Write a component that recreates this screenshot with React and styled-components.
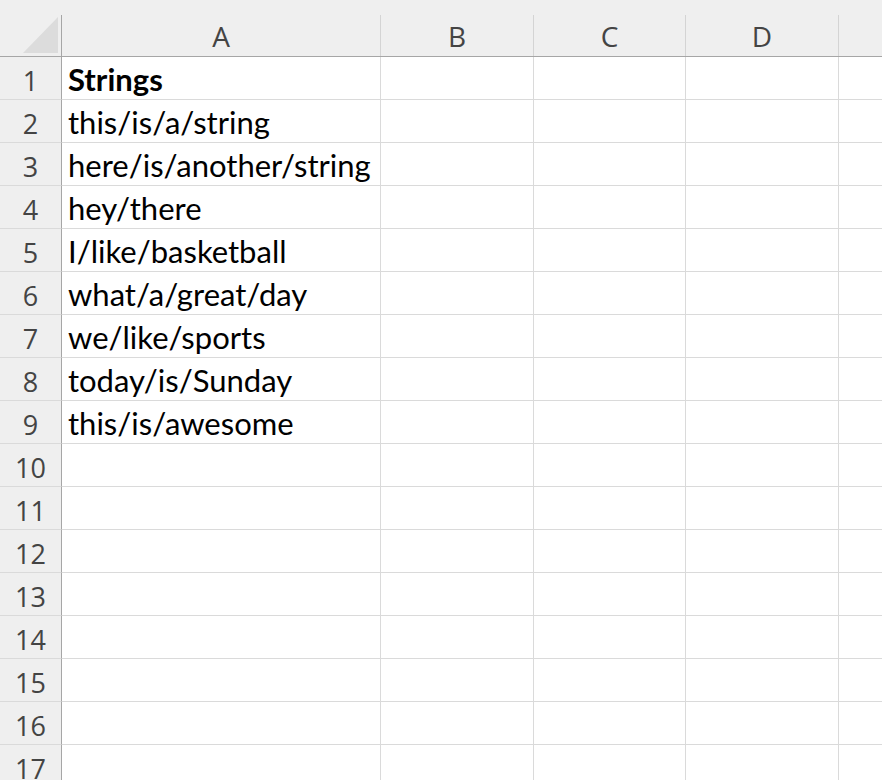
import React from "react";
import styled, { createGlobalStyle } from "styled-components";

const Global = createGlobalStyle`
  html, body { margin: 0; padding: 0; background: #ffffff; overflow: hidden; }
  body { width: 882px; height: 780px; }
`;

const COLS = [
  { key: "A", width: 319 },
  { key: "B", width: 153 },
  { key: "C", width: 152 },
  { key: "D", width: 153 },
  { key: "E", width: 120 },
];

const GRID = `62px ${COLS.map((c) => c.width + "px").join(" ")}`;

const Sheet = styled.div`
  width: 882px;
  height: 780px;
  overflow: hidden;
  background: #ffffff;
`;

const HeaderBar = styled.div`
  background: #efefef;
  padding-top: 15px;
  border-bottom: 1px solid #a6a6a6;
  display: grid;
  grid-template-columns: ${GRID};
`;

const Corner = styled.div`
  position: relative;
  height: 41px;
  box-sizing: border-box;
  border-right: 1px solid #a6a6a6;
`;

const CornerTriangle = styled.div`
  position: absolute;
  right: 3px;
  bottom: 3px;
  width: 35px;
  height: 36px;
  background: #dcdcdc;
  clip-path: polygon(100% 0, 100% 100%, 0 100%);
`;

const ColHead = styled.div`
  height: 41px;
  box-sizing: border-box;
  border-right: 1px solid #d4d4d4;
  display: flex;
  align-items: center;
  justify-content: center;
  font-family: "Open Sans", "Noto Sans", sans-serif;
  font-size: 28px;
  color: #444444;
  padding-top: 1px;
`;

const Row = styled.div`
  display: grid;
  grid-template-columns: ${GRID};
  height: 43px;
`;

const RowHead = styled.div`
  background: #efefef;
  box-sizing: border-box;
  border-right: 1px solid #a6a6a6;
  border-bottom: 1px solid #dadada;
  display: flex;
  align-items: center;
  justify-content: center;
  padding-top: 5px;
  font-family: "Open Sans", "Noto Sans", sans-serif;
  font-size: 27px;
  color: #444444;
`;

const Cell = styled.div`
  box-sizing: border-box;
  border-right: 1px solid #dadada;
  border-bottom: 1px solid #dadada;
  display: flex;
  align-items: flex-end;
  padding: 0 0 1px 6px;
  font-family: "Lato", "Open Sans", sans-serif;
  font-size: 31px;
  font-weight: ${(p) => (p.$bold ? 700 : 400)};
  color: #000000;
  white-space: nowrap;
  overflow: visible;
`;

const data = [
  { text: "Strings", bold: true },
  { text: "this/is/a/string" },
  { text: "here/is/another/string" },
  { text: "hey/there" },
  { text: "I/like/basketball" },
  { text: "what/a/great/day" },
  { text: "we/like/sports" },
  { text: "today/is/Sunday" },
  { text: "this/is/awesome" },
];

export default function App() {
  const rows = Array.from({ length: 17 }, (_, i) => data[i] || { text: "" });
  return (
    <Sheet>
      <Global />
      <HeaderBar>
        <Corner>
          <CornerTriangle />
        </Corner>
        {COLS.map((c) => (
          <ColHead key={c.key}>{c.key === "E" ? "" : c.key}</ColHead>
        ))}
      </HeaderBar>
      {rows.map((r, i) => (
        <Row key={i}>
          <RowHead>{i + 1}</RowHead>
          {COLS.map((c, j) => (
            <Cell key={c.key} $bold={j === 0 && r.bold}>
              {j === 0 ? r.text : ""}
            </Cell>
          ))}
        </Row>
      ))}
    </Sheet>
  );
}
